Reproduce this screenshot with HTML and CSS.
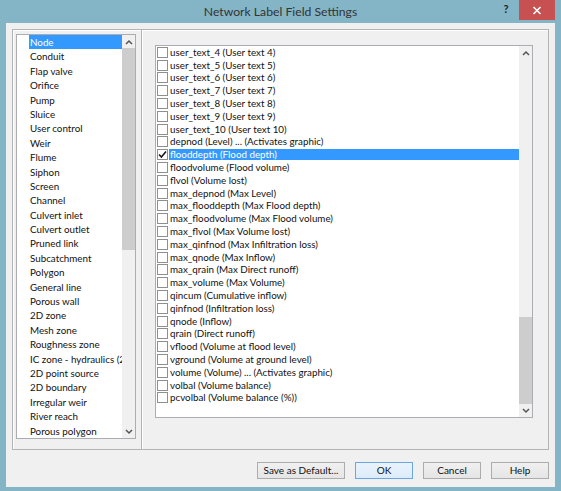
FILE: index.html
```html
<!DOCTYPE html>
<html>
<head>
<meta charset="utf-8">
<link rel="stylesheet" href="styles.css">
</head>
<body>
<div class="window">
  <div class="titlebar">
    <div class="title">Network Label Field Settings</div>
    <div class="caption-btns">
      <div class="help">?</div>
      <div class="close"><svg width="10" height="9" viewBox="0 0 10 9"><path d="M1.5 1 L8.5 8 M8.5 1 L1.5 8" stroke="#fff" stroke-width="1.6"/></svg></div>
    </div>
  </div>
  <div class="client">
    <div class="frame">
      <div class="leftpane">
        <div class="listbox leftlist">
          <div class="items">
            <div class="item sel"><span>Node</span></div>
            <div class="item"><span>Conduit</span></div>
            <div class="item"><span>Flap valve</span></div>
            <div class="item"><span>Orifice</span></div>
            <div class="item"><span>Pump</span></div>
            <div class="item"><span>Sluice</span></div>
            <div class="item"><span>User control</span></div>
            <div class="item"><span>Weir</span></div>
            <div class="item"><span>Flume</span></div>
            <div class="item"><span>Siphon</span></div>
            <div class="item"><span>Screen</span></div>
            <div class="item"><span>Channel</span></div>
            <div class="item"><span>Culvert inlet</span></div>
            <div class="item"><span>Culvert outlet</span></div>
            <div class="item"><span>Pruned link</span></div>
            <div class="item"><span>Subcatchment</span></div>
            <div class="item"><span>Polygon</span></div>
            <div class="item"><span>General line</span></div>
            <div class="item"><span>Porous wall</span></div>
            <div class="item"><span>2D zone</span></div>
            <div class="item"><span>Mesh zone</span></div>
            <div class="item"><span>Roughness zone</span></div>
            <div class="item"><span>IC zone - hydraulics (2D)</span></div>
            <div class="item"><span>2D point source</span></div>
            <div class="item"><span>2D boundary</span></div>
            <div class="item"><span>Irregular weir</span></div>
            <div class="item"><span>River reach</span></div>
            <div class="item"><span>Porous polygon</span></div>
          </div>
          <div class="vscroll lscroll">
            <div class="arrow"><svg width="8" height="6" viewBox="0 0 8 6"><path d="M1 5 L4 2 L7 5" fill="none" stroke="#555" stroke-width="1.5"/></svg></div>
            <div class="thumb"></div>
            <div class="track"></div>
            <div class="arrow"><svg width="8" height="6" viewBox="0 0 8 6"><path d="M1 1 L4 4 L7 1" fill="none" stroke="#555" stroke-width="1.5"/></svg></div>
          </div>
        </div>
      </div>
      <div class="divider"></div>
      <div class="rightpane">
        <div class="listbox rightlist">
          <div class="items">
            <div class="citem"><span class="cb"></span><span class="lbl">user_text_4 (User text 4)</span></div>
            <div class="citem"><span class="cb"></span><span class="lbl">user_text_5 (User text 5)</span></div>
            <div class="citem"><span class="cb"></span><span class="lbl">user_text_6 (User text 6)</span></div>
            <div class="citem"><span class="cb"></span><span class="lbl">user_text_7 (User text 7)</span></div>
            <div class="citem"><span class="cb"></span><span class="lbl">user_text_8 (User text 8)</span></div>
            <div class="citem"><span class="cb"></span><span class="lbl">user_text_9 (User text 9)</span></div>
            <div class="citem"><span class="cb"></span><span class="lbl">user_text_10 (User text 10)</span></div>
            <div class="citem"><span class="cb"></span><span class="lbl">depnod (Level) ... (Activates graphic)</span></div>
            <div class="citem sel"><span class="cb"><svg width="9" height="9" viewBox="0 0 9 9"><path d="M1 4.5 L3.4 7 L8 1.5" fill="none" stroke="#1a1a1a" stroke-width="1.6"/></svg></span><span class="lbl">flooddepth (Flood depth)</span></div>
            <div class="citem"><span class="cb"></span><span class="lbl">floodvolume (Flood volume)</span></div>
            <div class="citem"><span class="cb"></span><span class="lbl">flvol (Volume lost)</span></div>
            <div class="citem"><span class="cb"></span><span class="lbl">max_depnod (Max Level)</span></div>
            <div class="citem"><span class="cb"></span><span class="lbl">max_flooddepth (Max Flood depth)</span></div>
            <div class="citem"><span class="cb"></span><span class="lbl">max_floodvolume (Max Flood volume)</span></div>
            <div class="citem"><span class="cb"></span><span class="lbl">max_flvol (Max Volume lost)</span></div>
            <div class="citem"><span class="cb"></span><span class="lbl">max_qinfnod (Max Infiltration loss)</span></div>
            <div class="citem"><span class="cb"></span><span class="lbl">max_qnode (Max Inflow)</span></div>
            <div class="citem"><span class="cb"></span><span class="lbl">max_qrain (Max Direct runoff)</span></div>
            <div class="citem"><span class="cb"></span><span class="lbl">max_volume (Max Volume)</span></div>
            <div class="citem"><span class="cb"></span><span class="lbl">qincum (Cumulative inflow)</span></div>
            <div class="citem"><span class="cb"></span><span class="lbl">qinfnod (Infiltration loss)</span></div>
            <div class="citem"><span class="cb"></span><span class="lbl">qnode (Inflow)</span></div>
            <div class="citem"><span class="cb"></span><span class="lbl">qrain (Direct runoff)</span></div>
            <div class="citem"><span class="cb"></span><span class="lbl">vflood (Volume at flood level)</span></div>
            <div class="citem"><span class="cb"></span><span class="lbl">vground (Volume at ground level)</span></div>
            <div class="citem"><span class="cb"></span><span class="lbl">volume (Volume) ... (Activates graphic)</span></div>
            <div class="citem"><span class="cb"></span><span class="lbl">volbal (Volume balance)</span></div>
            <div class="citem"><span class="cb"></span><span class="lbl">pcvolbal (Volume balance (%))</span></div>
          </div>
          <div class="vscroll rscroll">
            <div class="arrow"><svg width="8" height="6" viewBox="0 0 8 6"><path d="M1 5 L4 2 L7 5" fill="none" stroke="#555" stroke-width="1.5"/></svg></div>
            <div class="track"></div>
            <div class="thumb"></div>
            <div class="arrow"><svg width="8" height="6" viewBox="0 0 8 6"><path d="M1 1 L4 4 L7 1" fill="none" stroke="#555" stroke-width="1.5"/></svg></div>
          </div>
        </div>
      </div>
    </div>
    <div class="buttons">
      <div class="btn save">Save as Default...</div>
      <div class="btn ok">OK</div>
      <div class="btn cancel">Cancel</div>
      <div class="btn helpbtn">Help</div>
    </div>
  </div>
</div>
</body>
</html>
```
FILE: styles.css
```css
* { box-sizing: border-box; }
html, body { margin: 0; padding: 0; }
body {
  width: 561px;
  height: 491px;
  overflow: hidden;
  background: #83b5c6;
  font-family: Lato, "Noto Sans", sans-serif;
  color: #000;
}
.window {
  width: 561px;
  height: 491px;
  display: flex;
  flex-direction: column;
}
.titlebar {
  height: 23px;
  display: grid;
  grid-template-columns: 1fr;
}
.title {
  grid-area: 1 / 1;
  text-align: center;
  font-size: 12.2px;
  color: #333;
  padding-top: 3px;
  line-height: 17px;
}
.caption-btns {
  grid-area: 1 / 1;
  justify-self: end;
  display: flex;
  align-items: flex-start;
  margin-right: 6px;
}
.help {
  width: 22px;
  text-align: center;
  font-size: 11px;
  font-weight: bold;
  color: #222;
  padding-top: 2px;
  margin-right: 2px;
}
.close {
  width: 36px;
  height: 20px;
  background: #c75050;
  display: flex;
  align-items: center;
  justify-content: center;
}
.client {
  flex: 1;
  margin: 0 6px 4px 6px;
  background: #f0f0f0;
  padding: 6px 6px 0 6px;
  display: flex;
  flex-direction: column;
}
.frame {
  height: 421px;
  border: 1px solid #b4b4b4;
  box-shadow: inset 1px 1px 0 #fff;
  display: flex;
}
.leftpane {
  width: 128px;
  padding: 4px 0 0 3px;
}
.divider {
  width: 2px;
  border-left: 1px solid #b4b4b4;
  border-right: 1px solid #fff;
}
.rightpane {
  flex: 1;
  padding: 15px 0 0 12px;
}
.listbox {
  background: #fff;
  border: 1px solid #abadb3;
  display: flex;
  overflow: hidden;
}
.leftlist {
  width: 120px;
  height: 405px;
}
.rightlist {
  width: 378px;
  height: 373px;
}
.items {
  flex: 1;
  min-width: 0;
  overflow: hidden;
}
.leftlist .items { padding-left: 12px; }
.item {
  height: 14.4px;
  line-height: 14.4px;
  font-size: 9.8px;
  white-space: nowrap;
  color: #111;
}
.item span { display: block; padding-left: 1px; }
.item.sel span { background: #3399ff; color: #fff; }
.citem {
  height: 12.8px;
  display: flex;
  align-items: center;
  font-size: 9.8px;
  white-space: nowrap;
  color: #111;
}
.cb {
  width: 11px;
  height: 11px;
  margin-left: 1px;
  margin-right: 1px;
  border: 1px solid #8e8f8f;
  background: #fff;
  flex: none;
  display: flex;
  align-items: center;
  justify-content: center;
}
.lbl {
  flex: 1;
  height: 11px;
  line-height: 11px;
  padding-left: 1px;
}
.citem.sel .lbl { background: #3399ff; color: #fff; }
.vscroll {
  width: 13px;
  flex: none;
  display: flex;
  flex-direction: column;
  background: #f0f0f0;
}
.arrow {
  height: 13px;
  display: flex;
  align-items: center;
  justify-content: center;
  flex: none;
}
.thumb { background: #cdcdcd; flex: none; }
.track { flex: 1; }
.lscroll .thumb { height: 202px; }
.rscroll .thumb { height: 87px; }
.buttons {
  display: flex;
  justify-content: flex-end;
  gap: 10px;
  margin-top: 12px;
}
.btn {
  height: 17px;
  border: 1px solid #acacac;
  background: linear-gradient(#f0f0f0, #e5e5e5);
  font-size: 10px;
  line-height: 15px;
  text-align: center;
  color: #111;
}
.save { width: 88px; }
.ok { width: 58px; border-color: #6aa6e2; background: linear-gradient(#eaf3fc, #dcecfc); }
.cancel { width: 58px; }
.helpbtn { width: 58px; }
```
